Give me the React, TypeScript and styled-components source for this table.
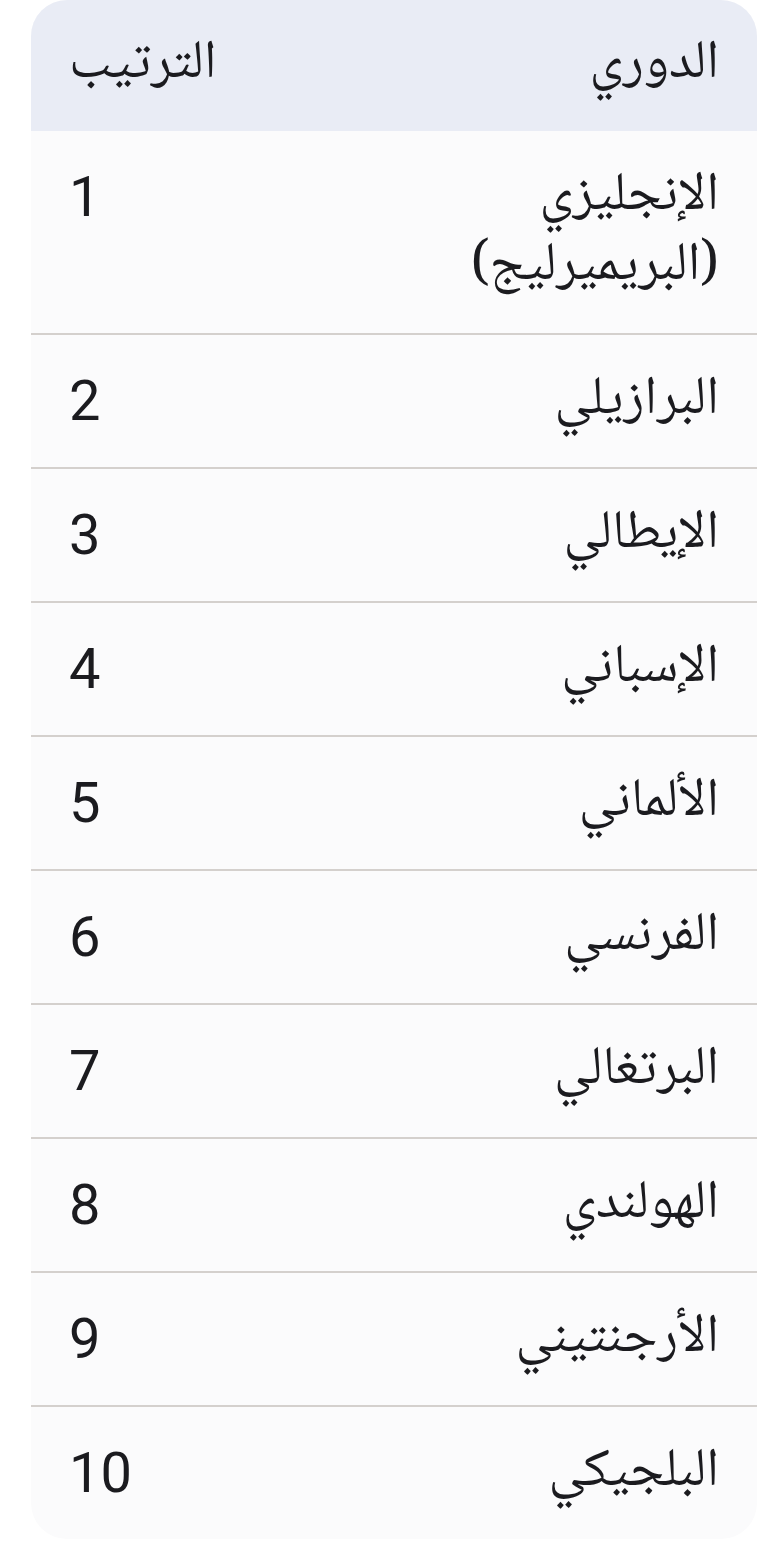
import React from "react";
import styled, { createGlobalStyle } from "styled-components";

const Global = createGlobalStyle`
  html, body { margin: 0; padding: 0; background: #ffffff; }
  body { font-family: "Noto Naskh Arabic", "Noto Sans Arabic", "DejaVu Sans", Roboto, sans-serif; }
`;

const Page = styled.div`
  padding: 0 3px 8px 31px;
`;

const Table = styled.div`
  direction: rtl;
  display: grid;
  grid-template-columns: 1fr 1fr;
  border-radius: 36px;
  overflow: hidden;
  background: #fbfbfc;
  color: #1b1b1f;
`;

const Cell = styled.div<{ $head?: boolean; $num?: boolean; $rank?: boolean; $last?: boolean }>`
  padding: ${(p) => (p.$head ? "30px 38px 31px" : "31px 38px")};
  background: ${(p) => (p.$head ? "#e9ecf5" : "transparent")};
  border-bottom: ${(p) => (p.$head || p.$last ? "none" : "2px solid #d4d0cd")};
  line-height: 70px;
  text-align: ${(p) => (p.$rank ? "left" : "right")};
  font-family: ${(p) =>
    p.$num
      ? 'Roboto, "Noto Sans", sans-serif'
      : '"Noto Naskh Arabic", "Noto Sans Arabic", "DejaVu Sans", sans-serif'};
  font-size: ${(p) => (p.$num ? "56px" : "54px")};
`;

const rows: [string, string][] = [
  ["الإنجليزي (البريميرليج)", "1"],
  ["البرازيلي", "2"],
  ["الإيطالي", "3"],
  ["الإسباني", "4"],
  ["الألماني", "5"],
  ["الفرنسي", "6"],
  ["البرتغالي", "7"],
  ["الهولندي", "8"],
  ["الأرجنتيني", "9"],
  ["البلجيكي", "10"],
];

export default function App() {
  return (
    <>
      <Global />
      <Page>
        <Table>
          <Cell $head>الدوري</Cell>
          <Cell $head $rank>الترتيب</Cell>
          {rows.map(([league, rank], i) => (
            <React.Fragment key={rank}>
              <Cell $last={i === rows.length - 1}>{league}</Cell>
              <Cell $num $rank $last={i === rows.length - 1}>
                {rank}
              </Cell>
            </React.Fragment>
          ))}
        </Table>
      </Page>
    </>
  );
}
